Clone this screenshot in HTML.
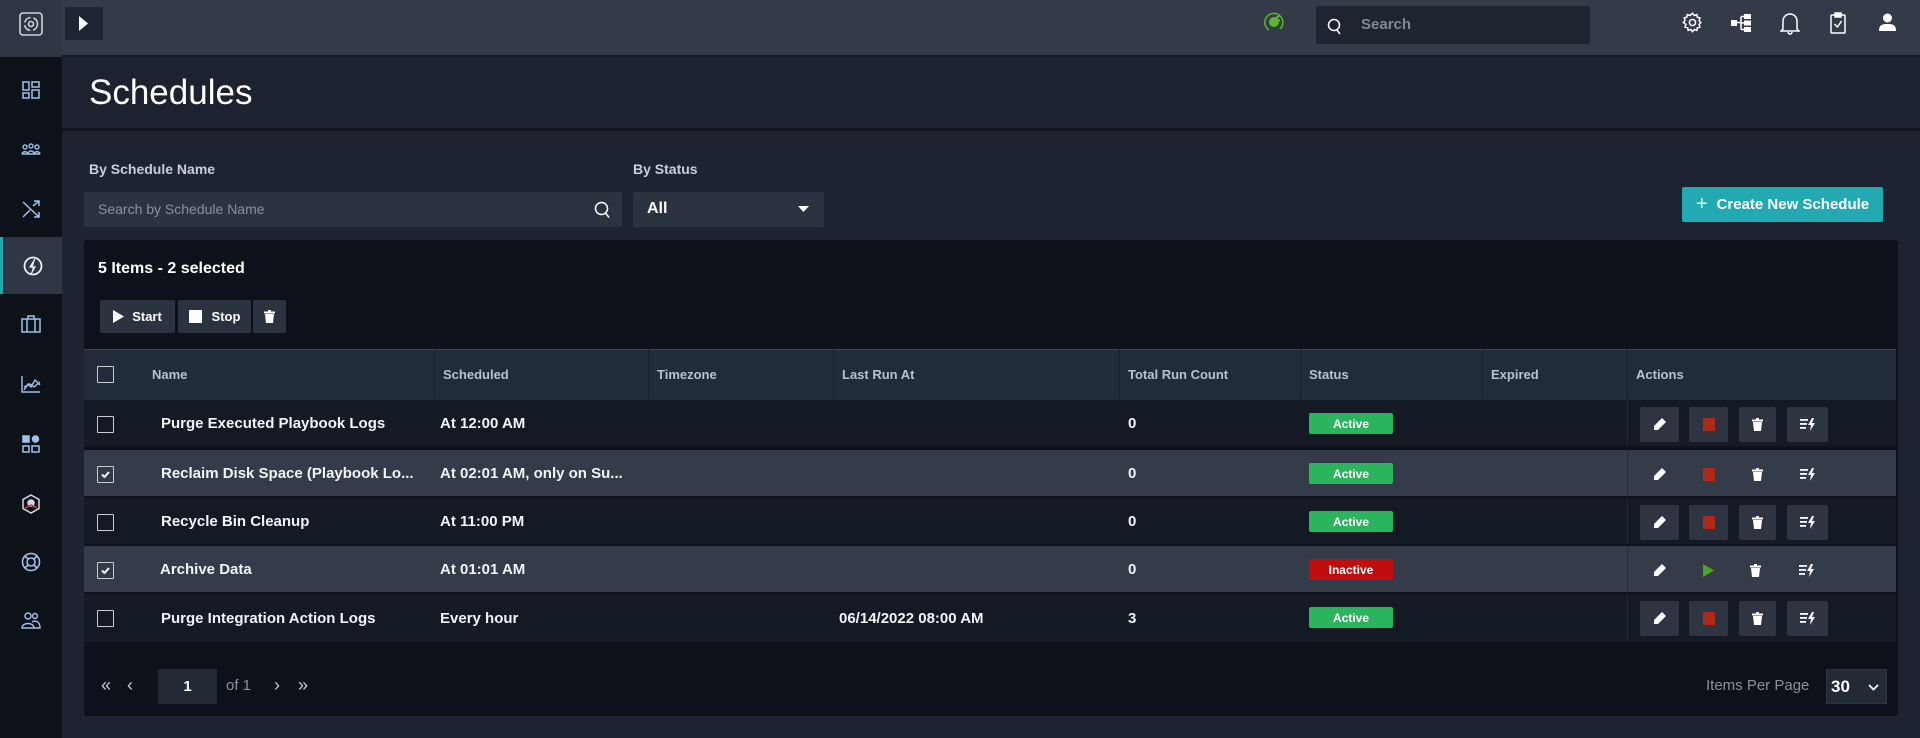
<!DOCTYPE html>
<html><head><meta charset="utf-8">
<style>
*{box-sizing:border-box;margin:0;padding:0}
body{width:1920px;height:738px;overflow:hidden;background:#1d2330;font-family:"Liberation Sans",sans-serif;color:#fff;position:relative}
.abs{position:absolute}
.side{left:0;top:0;width:62px;height:738px;background:#0d1118}
.logo{left:0;top:0;width:62px;height:57px;background:#2f3644}
.si{position:absolute;left:0;width:62px;height:48px;display:flex;align-items:center;justify-content:center}
.top{left:62px;top:0;width:1858px;height:57px;background:#333a48;border-bottom:2px solid #151a22}
.hdr{left:62px;top:59px;width:1858px;height:72px;background:#1c2230;border-bottom:3px solid #12161e}
.lbl{font-size:14px;color:#c7cfdb;font-weight:bold}
.btn{background:#2c3340;border-radius:2px;display:flex;align-items:center;justify-content:center;font-size:13px;font-weight:bold;color:#fff}
.row{position:absolute;left:84px;width:1812px;height:48px;border-bottom:2px solid #0e121a}
.cell{position:absolute;top:0;height:100%;display:flex;align-items:center;font-size:15px;font-weight:bold;color:#f2f4f7}
.cb{position:absolute;left:13px;top:16px;width:17px;height:17px;border:1.5px solid #c8ccd3;border-radius:1px}
.badge{position:absolute;left:1225px;top:13px;width:84px;height:21px;border-radius:2px;font-size:12px;font-weight:bold;color:#fff;display:flex;align-items:center;justify-content:center}
.ab{position:absolute;top:7px;width:39px;height:35px;background:#2e3441;border-radius:2px;display:flex;align-items:center;justify-content:center}
.th{position:absolute;top:0;height:50px;display:flex;align-items:center;font-size:13px;font-weight:bold;color:#b9c2ce;padding-left:8px;border-left:1px solid #1a212c}
</style></head><body>
<div class="abs side"></div>
<div class="abs logo"><svg class="abs" style="left:19px;top:12px" width="24" height="24" viewBox="0 0 24 24" fill="none" stroke="#cfd4dc" stroke-width="1.6"><rect x="1" y="1" width="22" height="22" rx="3"/><circle cx="12" cy="12" r="6.5" stroke-dasharray="8 3"/><circle cx="12" cy="12" r="2.5"/></svg></div>
<div class="si" style="top:66px"><svg width="18" height="18" viewBox="0 0 18 18" fill="none" stroke="#9fc1ea" stroke-width="1.5"><rect x="1" y="1" width="6" height="8"/><rect x="10" y="1" width="7" height="5"/><rect x="1" y="12" width="6" height="5"/><rect x="10" y="9" width="7" height="8"/></svg></div>
<div class="si" style="top:125px"><svg width="20" height="14" viewBox="0 0 20 14" fill="none" stroke="#9fc1ea" stroke-width="1.4"><circle cx="4" cy="5" r="2"/><circle cx="10" cy="4" r="2"/><circle cx="16" cy="5" r="2"/><path d="M1 12c0-3 6-3 6 0M7 12c0-4 6-4 6 0M13 12c0-3 6-3 6 0M1 12h18"/></svg></div>
<div class="si" style="top:185px"><svg width="18" height="18" viewBox="0 0 18 18" fill="none" stroke="#9fc1ea" stroke-width="1.5"><path d="M1 2l16 15M1 17L8 10M11 6l6-5M12 1h5v5M12 17h5v-5"/></svg></div>
<div class="si" style="top:237px;height:57px;background:#2f3644;border-left:3px solid #27a8b0"><svg width="22" height="22" viewBox="0 0 22 22" fill="none" stroke="#eef0f3" stroke-width="1.8"><circle cx="11" cy="11" r="8.5"/><path d="M13 4l-5 8h5l-4 7" fill="#eef0f3" stroke-width="1.2"/></svg></div>
<div class="si" style="top:300px"><svg width="20" height="18" viewBox="0 0 20 18" fill="none" stroke="#9fc1ea" stroke-width="1.5"><rect x="1" y="4" width="18" height="13"/><path d="M7 4V1h6v3M6 4v13M14 4v13"/></svg></div>
<div class="si" style="top:360px"><svg width="20" height="18" viewBox="0 0 20 18" fill="none" stroke="#9fc1ea" stroke-width="1.4"><path d="M1 1v16h18M3 15l4-6 3 3 4-7 5 5M3 12l6-3 4 3 6-5"/></svg></div>
<div class="si" style="top:420px"><svg width="18" height="18" viewBox="0 0 18 18" fill="none" stroke="#9fc1ea" stroke-width="1.5"><rect x="1" y="1" width="6" height="6" fill="#9fc1ea"/><circle cx="13.5" cy="4" r="3" fill="#9fc1ea"/><rect x="1" y="11" width="6" height="6"/><rect x="10" y="11" width="7" height="6"/></svg></div>
<div class="si" style="top:480px"><svg width="20" height="20" viewBox="0 0 20 20" fill="none" stroke="#cfd9e8" stroke-width="1.5"><path d="M10 1l8 4.5v9L10 19l-8-4.5v-9z"/><circle cx="10" cy="9" r="3" fill="#cfd9e8"/><path d="M4 14l6-3 6 3" stroke="#d04040"/></svg></div>
<div class="si" style="top:538px"><svg width="20" height="20" viewBox="0 0 20 20" fill="none" stroke="#9fc1ea" stroke-width="1.6"><circle cx="10" cy="10" r="8.5"/><circle cx="10" cy="10" r="4"/><path d="M4 4l3 3M16 4l-3 3M4 16l3-3M16 16l-3-3"/></svg></div>
<div class="si" style="top:596px"><svg width="20" height="18" viewBox="0 0 20 18" fill="none" stroke="#9fc1ea" stroke-width="1.4"><circle cx="7" cy="5" r="3"/><circle cx="14" cy="5" r="2.5"/><path d="M1 17c0-6 12-6 12 0zM11 11c3-2 8-1 8 6h-6"/></svg></div>

<div class="abs top"></div>
<div class="abs" style="left:65px;top:7px;width:38px;height:33px;background:#1e2430;border-radius:2px"><svg class="abs" style="left:14px;top:9px" width="9" height="15" viewBox="0 0 9 15"><path d="M0 0l9 7.5L0 15z" fill="#fff"/></svg></div>
<svg class="abs" style="left:1263px;top:11px" width="22" height="22" viewBox="0 0 22 22"><path d="M6 19A9 9 0 1 1 17 18" fill="none" stroke="#5cb82a" stroke-width="1.5"/><circle cx="11" cy="11" r="5" fill="#5cb82a"/><path d="M13 7l3-2M14 10l3-1" stroke="#5cb82a" stroke-width="2"/></svg>
<div class="abs" style="left:1316px;top:6px;width:274px;height:38px;background:#1e2430;border-radius:2px"><svg class="abs" style="left:11px;top:12px" width="16" height="17" viewBox="0 0 16 17" fill="none" stroke="#fff" stroke-width="1.5"><circle cx="7" cy="7" r="5.5"/><path d="M10 12l3 4"/></svg><span class="abs" style="left:45px;top:10px;font-size:15px;color:#838a96;font-weight:bold">Search</span></div>
<svg class="abs" style="left:1682px;top:12px" width="21" height="21" viewBox="0 0 24 24" fill="none" stroke="#fff" stroke-width="1.7"><circle cx="12" cy="12" r="3.5"/><path d="M12 1.5l2 2.5 3-1 .5 3 3 .8-1 3 2 2.2-2 2.2 1 3-3 .8-.5 3-3-1-2 2.5-2-2.5-3 1-.5-3-3-.8 1-3L1.5 12l2-2.2-1-3 3-.8.5-3 3 1z"/></svg>
<svg class="abs" style="left:1731px;top:14px" width="20" height="18" viewBox="0 0 20 18" fill="#fff"><rect x="0" y="6" width="6" height="6"/><rect x="13" y="0" width="7" height="5"/><rect x="13" y="6.5" width="7" height="5"/><rect x="13" y="13" width="7" height="5"/><path d="M6 8.5h4M10 2.5v13M10 2.5h3M10 9h3M10 15.5h3" stroke="#fff" stroke-width="1.5"/></svg>
<svg class="abs" style="left:1780px;top:12px" width="20" height="23" viewBox="0 0 20 23" fill="none" stroke="#fff" stroke-width="1.5"><path d="M3 17V9a7 7 0 0 1 14 0v8l2 2H1z"/><path d="M8 20a2 2 0 0 0 4 0"/></svg>
<svg class="abs" style="left:1830px;top:12px" width="16" height="22" viewBox="0 0 16 22" fill="none" stroke="#fff" stroke-width="1.5"><rect x="1" y="3" width="14" height="18" rx="1"/><rect x="5" y="1" width="6" height="4" fill="#fff"/><path d="M4.5 12l3 3 4-6"/></svg>
<svg class="abs" style="left:1879px;top:13px" width="17" height="18" viewBox="0 0 17 18" fill="#fff"><circle cx="8.5" cy="5" r="4.5"/><path d="M0 18c0-6 3-7 8.5-7s8.5 1 8.5 7z"/></svg>

<div class="abs hdr"><span class="abs" style="left:27px;top:14px;font-size:35px;color:#fff">Schedules</span></div>

<span class="abs lbl" style="left:89px;top:161px">By Schedule Name</span>
<span class="abs lbl" style="left:633px;top:161px">By Status</span>
<div class="abs" style="left:84px;top:192px;width:538px;height:35px;background:#2c3340;border-radius:2px"><span class="abs" style="left:14px;top:9px;font-size:14px;color:#8a919c">Search by Schedule Name</span><svg class="abs" style="left:510px;top:9px" width="17" height="18" viewBox="0 0 17 18" fill="none" stroke="#fff" stroke-width="1.5"><circle cx="7.5" cy="7.5" r="6"/><path d="M11.5 12l3.5 4.5"/></svg></div>
<div class="abs" style="left:633px;top:192px;width:191px;height:35px;background:#2c3340;border-radius:2px"><span class="abs" style="left:14px;top:8px;font-size:16px;font-weight:bold">All</span><svg class="abs" style="left:165px;top:14px" width="11" height="6"><path d="M0 0h11L5.5 6z" fill="#fff"/></svg></div>
<div class="abs" style="left:1682px;top:187px;width:201px;height:35px;background:#22a9b1;border-radius:2px;display:flex;align-items:center;justify-content:center;font-size:15px;font-weight:bold;color:#fff"><span style="font-size:20px;font-weight:normal;margin-right:9px">+</span>Create New Schedule</div>

<div class="abs" style="left:84px;top:240px;width:1814px;height:476px;background:#0d1119;border-radius:3px"></div>
<span class="abs" style="left:98px;top:260px;font-size:16px;font-weight:bold">5 Items - 2 selected</span>
<div class="abs btn" style="left:100px;top:300px;width:75px;height:33px"><svg width="11" height="13" style="margin-right:8px"><path d="M0 0l11 6.5L0 13z" fill="#fff"/></svg>Start</div>
<div class="abs btn" style="left:178px;top:300px;width:73px;height:33px"><span style="width:13px;height:13px;background:#fff;margin-right:10px;display:inline-block"></span>Stop</div>
<div class="abs btn" style="left:253px;top:300px;width:33px;height:33px"><svg width="11" height="13" viewBox="0 0 11 13" fill="#fff"><rect x="0" y="1.5" width="11" height="2"/><rect x="4" y="0" width="3" height="2"/><path d="M1 4h9l-1 9H2z"/></svg></div>

<div class="abs" style="left:84px;top:349px;width:1812px;height:51px;background:#222b39;border-top:1px solid #3a4558"></div>
<div class="abs" style="left:84px;top:349px;width:1812px;height:51px">
<div class="cb" style="top:17px"></div>
<div class="th" style="left:60px;border:none">Name</div>
<div class="th" style="left:350px">Scheduled</div>
<div class="th" style="left:564px">Timezone</div>
<div class="th" style="left:749px">Last Run At</div>
<div class="th" style="left:1035px">Total Run Count</div>
<div class="th" style="left:1216px">Status</div>
<div class="th" style="left:1398px">Expired</div>
<div class="th" style="left:1543px">Actions</div>
</div>

<!-- rows -->
<div class="row" style="top:400px;background:#141a24">
<div class="cb"></div><div class="cell" style="left:77px">Purge Executed Playbook Logs</div><div class="cell" style="left:356px">At 12:00 AM</div><div class="cell" style="left:1044px">0</div>
<div class="badge" style="background:#29b45d">Active</div>
<div style="position:absolute;left:1543px;top:0;height:100%;border-left:1px solid #252c38"></div>
<div class="ab" style="left:1556px"><svg width="13" height="13" viewBox="0 0 13 13" fill="#fff"><path d="M9 0l4 4-8 8H1V8z"/></svg></div>
<div class="ab" style="left:1605px"><span style="width:12px;height:13px;background:#ad2a16"></span></div>
<div class="ab" style="left:1655px;width:37px"><svg width="11" height="13" viewBox="0 0 11 13" fill="#fff"><rect x="0" y="1.5" width="11" height="2"/><rect x="4" y="0" width="3" height="2"/><path d="M1 4h9l-1 9H2z"/></svg></div>
<div class="ab" style="left:1703px;width:41px"><svg width="16" height="13" viewBox="0 0 16 13" fill="#fff"><rect x="0" y="1" width="8" height="1.8"/><rect x="0" y="5" width="7" height="1.8"/><rect x="0" y="9" width="6" height="1.8"/><path d="M12 0L8 7h3l-1 6 5-8h-3l2-5z"/></svg></div>
</div>
<div class="row" style="top:450px;background:#343b49">
<div class="cb"><svg style="position:absolute;left:3px;top:4px" width="9" height="7"><path d="M1 3.5l2.5 2.5L8 1" stroke="#fff" stroke-width="2" fill="none"/></svg></div><div class="cell" style="left:77px">Reclaim Disk Space (Playbook Lo...</div><div class="cell" style="left:356px">At 02:01 AM, only on Su...</div><div class="cell" style="left:1044px">0</div>
<div class="badge" style="background:#29b45d">Active</div>
<div style="position:absolute;left:1543px;top:0;height:100%;border-left:1px solid #252c38"></div>
<div class="ab" style="left:1556px;background:none"><svg width="13" height="13" viewBox="0 0 13 13" fill="#fff"><path d="M9 0l4 4-8 8H1V8z"/></svg></div>
<div class="ab" style="left:1605px;background:none"><span style="width:12px;height:13px;background:#ad2a16"></span></div>
<div class="ab" style="left:1655px;width:37px;background:none"><svg width="11" height="13" viewBox="0 0 11 13" fill="#fff"><rect x="0" y="1.5" width="11" height="2"/><rect x="4" y="0" width="3" height="2"/><path d="M1 4h9l-1 9H2z"/></svg></div>
<div class="ab" style="left:1703px;width:41px;background:none"><svg width="16" height="13" viewBox="0 0 16 13" fill="#fff"><rect x="0" y="1" width="8" height="1.8"/><rect x="0" y="5" width="7" height="1.8"/><rect x="0" y="9" width="6" height="1.8"/><path d="M12 0L8 7h3l-1 6 5-8h-3l2-5z"/></svg></div>
</div>
<div class="row" style="top:498px;background:#141a24">
<div class="cb"></div><div class="cell" style="left:77px">Recycle Bin Cleanup</div><div class="cell" style="left:356px">At 11:00 PM</div><div class="cell" style="left:1044px">0</div>
<div class="badge" style="background:#29b45d">Active</div>
<div style="position:absolute;left:1543px;top:0;height:100%;border-left:1px solid #252c38"></div>
<div class="ab" style="left:1556px"><svg width="13" height="13" viewBox="0 0 13 13" fill="#fff"><path d="M9 0l4 4-8 8H1V8z"/></svg></div>
<div class="ab" style="left:1605px"><span style="width:12px;height:13px;background:#ad2a16"></span></div>
<div class="ab" style="left:1655px;width:37px"><svg width="11" height="13" viewBox="0 0 11 13" fill="#fff"><rect x="0" y="1.5" width="11" height="2"/><rect x="4" y="0" width="3" height="2"/><path d="M1 4h9l-1 9H2z"/></svg></div>
<div class="ab" style="left:1703px;width:41px"><svg width="16" height="13" viewBox="0 0 16 13" fill="#fff"><rect x="0" y="1" width="8" height="1.8"/><rect x="0" y="5" width="7" height="1.8"/><rect x="0" y="9" width="6" height="1.8"/><path d="M12 0L8 7h3l-1 6 5-8h-3l2-5z"/></svg></div>
</div>
<div class="row" style="top:546px;background:#343b49">
<div class="cb"><svg style="position:absolute;left:3px;top:4px" width="9" height="7"><path d="M1 3.5l2.5 2.5L8 1" stroke="#fff" stroke-width="2" fill="none"/></svg></div><div class="cell" style="left:76px">Archive Data</div><div class="cell" style="left:356px">At 01:01 AM</div><div class="cell" style="left:1044px">0</div>
<div class="badge" style="background:#c10d0d">Inactive</div>
<div style="position:absolute;left:1543px;top:0;height:100%;border-left:1px solid #252c38"></div>
<div class="ab" style="left:1556px;background:none"><svg width="13" height="13" viewBox="0 0 13 13" fill="#fff"><path d="M9 0l4 4-8 8H1V8z"/></svg></div>
<div class="ab" style="left:1605px;background:none"><svg width="11" height="13"><path d="M0 0l11 6.5L0 13z" fill="#4ca51f"/></svg></div>
<div class="ab" style="left:1653px;width:37px;background:none"><svg width="11" height="13" viewBox="0 0 11 13" fill="#fff"><rect x="0" y="1.5" width="11" height="2"/><rect x="4" y="0" width="3" height="2"/><path d="M1 4h9l-1 9H2z"/></svg></div>
<div class="ab" style="left:1702px;width:41px;background:none"><svg width="16" height="13" viewBox="0 0 16 13" fill="#fff"><rect x="0" y="1" width="8" height="1.8"/><rect x="0" y="5" width="7" height="1.8"/><rect x="0" y="9" width="6" height="1.8"/><path d="M12 0L8 7h3l-1 6 5-8h-3l2-5z"/></svg></div>
</div>
<div class="row" style="top:594px;background:#141a24;border-bottom:none">
<div class="cb"></div><div class="cell" style="left:77px">Purge Integration Action Logs</div><div class="cell" style="left:356px">Every hour</div><div class="cell" style="left:755px">06/14/2022 08:00 AM</div><div class="cell" style="left:1044px">3</div>
<div class="badge" style="background:#29b45d">Active</div>
<div style="position:absolute;left:1543px;top:0;height:100%;border-left:1px solid #252c38"></div>
<div class="ab" style="left:1556px"><svg width="13" height="13" viewBox="0 0 13 13" fill="#fff"><path d="M9 0l4 4-8 8H1V8z"/></svg></div>
<div class="ab" style="left:1605px"><span style="width:12px;height:13px;background:#ad2a16"></span></div>
<div class="ab" style="left:1655px;width:37px"><svg width="11" height="13" viewBox="0 0 11 13" fill="#fff"><rect x="0" y="1.5" width="11" height="2"/><rect x="4" y="0" width="3" height="2"/><path d="M1 4h9l-1 9H2z"/></svg></div>
<div class="ab" style="left:1703px;width:41px"><svg width="16" height="13" viewBox="0 0 16 13" fill="#fff"><rect x="0" y="1" width="8" height="1.8"/><rect x="0" y="5" width="7" height="1.8"/><rect x="0" y="9" width="6" height="1.8"/><path d="M12 0L8 7h3l-1 6 5-8h-3l2-5z"/></svg></div>
</div>

<!-- pagination -->
<span class="abs" style="left:101px;top:675px;font-size:18px;color:#c8ccd3">«</span>
<span class="abs" style="left:127px;top:675px;font-size:18px;color:#c8ccd3">‹</span>
<div class="abs" style="left:158px;top:669px;width:59px;height:35px;background:#222a36;display:flex;align-items:center;justify-content:center;font-size:15px;font-weight:bold">1</div>
<span class="abs" style="left:226px;top:677px;font-size:15px;color:#8a919c">of 1</span>
<span class="abs" style="left:274px;top:675px;font-size:18px;color:#c8ccd3">›</span>
<span class="abs" style="left:298px;top:675px;font-size:18px;color:#c8ccd3">»</span>
<span class="abs" style="left:1706px;top:677px;font-size:15px;color:#8a919c">Items Per Page</span>
<div class="abs" style="left:1826px;top:669px;width:61px;height:35px;background:#222a36;border:1px solid #2d3542"><span class="abs" style="left:4px;top:7px;font-size:17px;font-weight:bold">30</span><svg class="abs" style="left:41px;top:14px" width="11" height="7" fill="none" stroke="#fff" stroke-width="1.8"><path d="M1 1l4.5 4.5L10 1"/></svg></div>
</body></html>
